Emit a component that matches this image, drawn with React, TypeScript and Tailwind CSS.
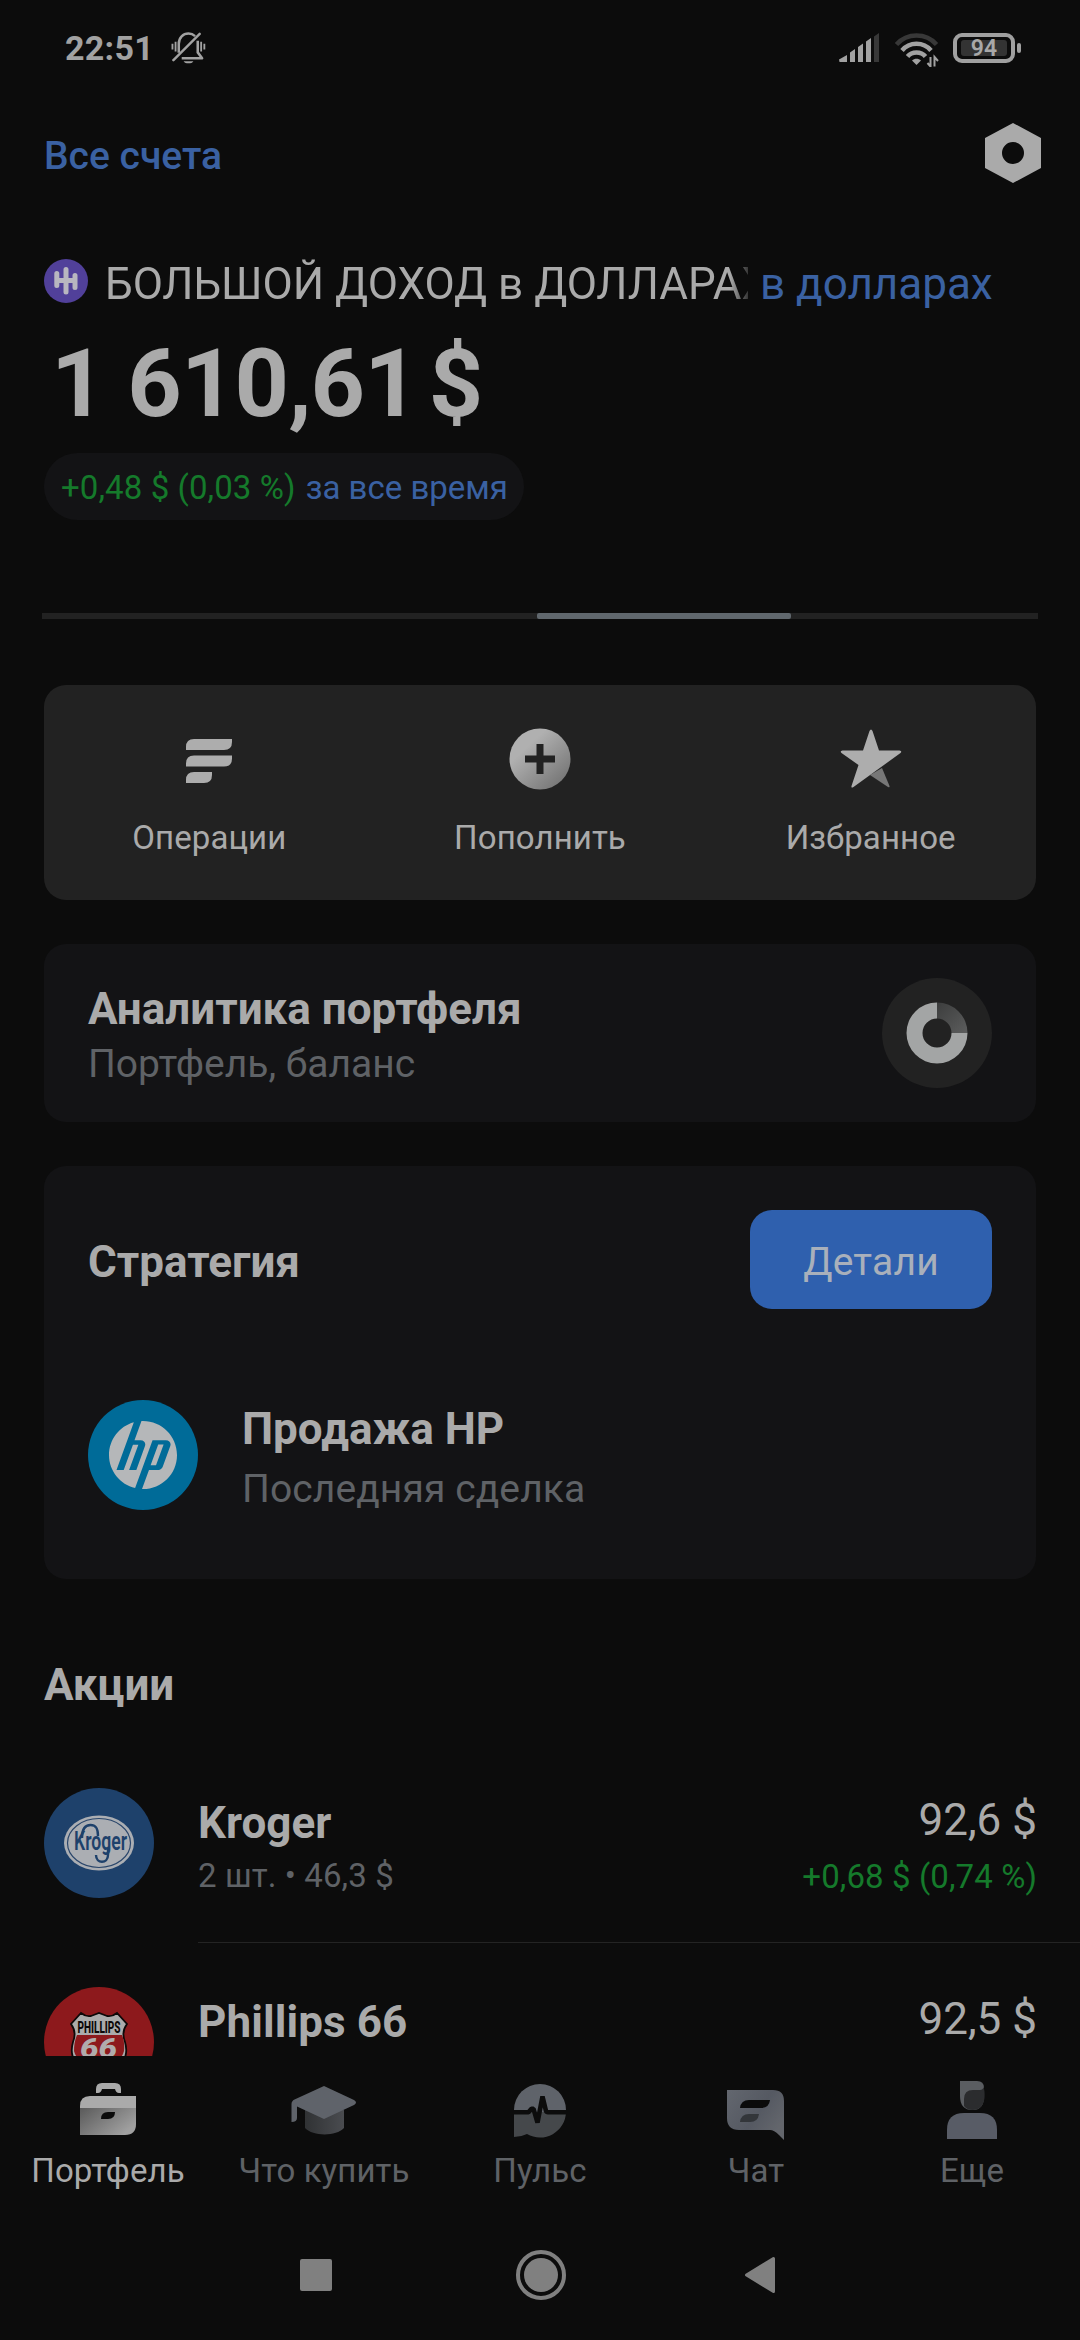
import type { ReactNode } from "react";
import { SiHp } from "react-icons/si";

function StatusBar() {
  return (
    <div className="flex h-[96px] shrink-0 items-center pl-[65px] pr-[59px] text-[#a2a2a2]">
      <span className="text-[34px] font-bold leading-10 tracking-[0.3px]">22:51</span>
      <svg className="ml-[17px]" width="35" height="34" viewBox="0 0 36 34" fill="none" stroke="currentColor" strokeWidth="2.6">
        <path d="M8 22V13C8 6 12.5 2.2 18 2.2c3 0 5 1 6.800 2.600M27.500 9.500V21.500l4.500 6H11" strokeLinejoin="round" />
        <path d="M2.500 29.500 29.500 2.500" strokeLinecap="round" />
        <path d="M1.500 12.500v6M4.700 10.500v10M31 10.500v10M34.300 12.500v6" strokeWidth="1.900" />
        <path d="M13 30.500h10c-1.500 3-8.500 3-10 0z" fill="currentColor" stroke="none" />
      </svg>
      <div className="grow" />
      <svg width="40" height="30" viewBox="0 0 40 30" fill="currentColor">
        <path d="M0 26.500 8 22v7H.5zM11 19.500l5-3.500V29h-5zM19 14l5-3.500V29h-5zM27 8.500l5-3.500V29h-5z" />
        <path d="M35 3.500 40 0v29h-5z" fill="#383838" />
      </svg>
      <svg className="ml-[16px] mt-[3px]" width="44" height="34" viewBox="0 0 44 34" fill="none" stroke="currentColor" strokeWidth="4.500">
        <path d="M1.500 11.500C12 -.5 31 -.5 41.500 11.500" stroke="#383838" />
        <path d="M7 17.500C14.500 8.500 28.500 8.500 36 17.500" />
        <path d="M12.500 23.500c4.500-5.500 13.500-5.500 18 0" />
        <path d="M17 27.500c2.500-2.200 6.500-2.200 9 0L21.500 32z" fill="currentColor" stroke="none" />
        <path d="M35.500 24v9.500l-3-3.500M39.500 33.500V24l3.500 4" strokeWidth="2" />
      </svg>
      <div className="ml-[14px] flex h-[30px] w-[62px] items-center justify-center rounded-[9px] border-4 border-[#a0a0a0]">
        <div className="flex h-[16px] w-[46px] items-center justify-center rounded-[3px] bg-[#333333] pt-[2px] text-[23px] font-semibold leading-4 text-[#a8a8a8]">94</div>
      </div>
      <div className="ml-[2px] h-[10px] w-[4px] rounded-full bg-[#a0a0a0]" />
    </div>
  );
}

function Header() {
  return (
    <div className="flex h-[114px] shrink-0 items-center justify-between pl-[44px] pr-[38px]">
      <span className="pt-[5px] text-[39px] font-medium leading-[50px] text-[#3a61a2]">Все счета</span>
      <svg width="58" height="60" viewBox="0 0 58 60">
        <path fillRule="evenodd" fill="#aaaaaa" d="M29 0 57 15V45L29 60 1 45V15zM29 19a11 11 0 1 0 0 22 11 11 0 0 0 0-22z" />
      </svg>
    </div>
  );
}

function Balance() {
  return (
    <div className="mt-[44px] shrink-0 px-[44px]">
      <div className="flex h-[60px] items-center">
        <svg className="-mt-[6px]" width="44" height="44" viewBox="0 0 44 44">
          <circle cx="22" cy="22" r="22" fill="#51409a" />
          <path d="M12.800 14.500v12M22 10.500v22.500M31 16.500v12M12.800 21.500H31" stroke="#b8b6c0" strokeWidth="5" strokeLinecap="round" fill="none" />
        </svg>
        <div className="ml-[17px] w-[643px] overflow-hidden whitespace-nowrap text-[44px] leading-[60px] text-[#aaaaaa] [mask-image:linear-gradient(to_right,black_625px,transparent_650px)]">
          БОЛЬШОЙ ДОХОД в ДОЛЛАРАХ
        </div>
        <span className="ml-[12px] whitespace-nowrap text-[44px] leading-[60px] text-[#3a61a2]">в долларах</span>
      </div>
      <div className="mt-[20px] flex h-[100px] pl-[7px] text-[95px] font-bold leading-[100px] tracking-[-0.9px] text-[#aaaaaa]">
        <span>1 610,61</span>
        <span className="ml-[11px]">$</span>
      </div>
      <div className="mt-[19px] flex h-[67px] w-[480px] items-center whitespace-nowrap rounded-full bg-[#131315] pl-[17px] pt-[2px] text-[33px]">
        <span className="tracking-[0.1px] text-[#157a2b]">+0,48 $ (0,03 %)</span>
        <span className="ml-[10px] text-[#3a61a2]">за все время</span>
      </div>
    </div>
  );
}

const actions: { label: string; icon: ReactNode }[] = [
  {
    label: "Операции",
    icon: (
      <svg width="62" height="62" viewBox="0 0 62 62" fill="#adadad">
        <path d="M8 22v-3q0-8 8-8h38v3q0 8-8 8zM8 38.500v-3q0-8 8-8h38v3q0 8-8 8zM8 55v-3q0-8 8-8h18v3q0 8-8 8z" />
      </svg>
    ),
  },
  {
    label: "Пополнить",
    icon: (
      <svg width="62" height="62" viewBox="0 0 62 62">
        <defs>
          <linearGradient id="plus" x1="0.15" y1="0.15" x2="0.85" y2="0.9">
            <stop offset="0.2" stopColor="#b0b0b0" />
            <stop offset="1" stopColor="#777777" />
          </linearGradient>
        </defs>
        <circle cx="31" cy="31" r="30.500" fill="url(#plus)" />
        <path d="M31 16v30M16 31h30" stroke="#222222" strokeWidth="7" />
      </svg>
    ),
  },
  {
    label: "Избранное",
    icon: (
      <svg width="62" height="62" viewBox="0 0 62 62">
        <path d="M42 40 49.500 58q.5 2-1.500 1L30 47z" fill="#777777" />
        <path d="M29.500 3q1.500-3 3 0l6.500 19.500h20.500q3 .5 1 2.500L13.500 59q-2.500 1.500-2-1L18.500 37 1.500 25q-2-2 1-2.500h20.500z" fill="#adadad" />
      </svg>
    ),
  },
];

function Actions() {
  return (
    <div className="mx-[44px] mt-[66px] grid h-[215px] shrink-0 grid-cols-3 rounded-[22px] bg-[#222222]">
      {actions.map((a) => (
        <div key={a.label} className="flex flex-col items-center pt-[43px]">
          {a.icon}
          <span className="mt-[28px] text-[33px] leading-10 tracking-[0.1px] text-[#aaaaaa]">{a.label}</span>
        </div>
      ))}
    </div>
  );
}

function Analytics() {
  return (
    <div className="mx-[44px] mt-[44px] flex h-[178px] shrink-0 items-center justify-between rounded-[22px] bg-[#131315] px-[44px]">
      <div className="flex flex-col pt-[6px]">
        <span className="text-[44px] font-bold leading-[56px] text-[#aaaaaa]">Аналитика портфеля</span>
        <span className="text-[39px] leading-[55px] text-[#5f6266]">Портфель, баланс</span>
      </div>
      <svg width="110" height="110" viewBox="0 0 110 110">
        <defs>
          <linearGradient id="slice" x1="0" y1="0" x2="1" y2="1">
            <stop offset="0" stopColor="#3c3d3d" />
            <stop offset="1" stopColor="#5c5d5d" />
          </linearGradient>
        </defs>
        <circle cx="55" cy="55" r="55" fill="#222222" />
        <path d="M55 24.500A30.500 30.500 0 1 0 85.500 55H69.500A14.500 14.500 0 1 1 55 40.500z" fill="#a3a5a5" />
        <path d="M55 24.500A30.500 30.500 0 0 1 85.500 55H69.500A14.500 14.500 0 0 0 55 40.500z" fill="url(#slice)" />
      </svg>
    </div>
  );
}

function Strategy() {
  return (
    <div className="mx-[44px] mt-[44px] h-[413px] shrink-0 rounded-[22px] bg-[#131315] px-[44px] pt-[44px]">
      <div className="flex items-center justify-between">
        <span className="pt-[4px] text-[44px] font-bold leading-[56px] text-[#aaaaaa]">Стратегия</span>
        <button className="h-[99px] w-[242px] rounded-[22px] bg-[#2f60ae] pt-[5px] text-[39px] tracking-[0.2px] text-[#a9b0bb]">Детали</button>
      </div>
      <div className="mt-[91px] flex h-[110px] items-center">
        <div className="flex size-[110px] items-center justify-center rounded-full bg-[#006b98]">
          <SiHp size={68} color="#b5b7b9" />
        </div>
        <div className="ml-[44px] flex flex-col pt-[8px]">
          <span className="text-[44px] font-bold leading-[60px] text-[#aaaaaa]">Продажа HP</span>
          <span className="text-[39px] leading-[60px] tracking-[0.1px] text-[#5f6266]">Последняя сделка</span>
        </div>
      </div>
    </div>
  );
}

function KrogerLogo() {
  return (
    <svg width="110" height="110" viewBox="0 0 110 110">
      <circle cx="55" cy="55" r="55" fill="#1e416b" />
      <ellipse cx="55" cy="55" rx="35" ry="27.500" fill="#abaeb3" />
      <ellipse cx="55" cy="55" rx="31.500" ry="24.500" fill="none" stroke="#2a466b" strokeWidth="1.200" />
      <text x="30" y="62" textLength="53" lengthAdjust="spacingAndGlyphs" fontFamily="Roboto" fontSize="25" fontWeight="600" fill="#1e416b">Kroger</text>
      <path d="M38 50C38 40 42 37 46.500 37c6 0 7.500 4 7.500 11M52 67c0 9 12 9 12 0V60" fill="none" stroke="#1e416b" strokeWidth="2.400" />
    </svg>
  );
}

function PhillipsLogo() {
  return (
    <svg width="110" height="110" viewBox="0 0 110 110">
      <circle cx="55" cy="55" r="55" fill="#8d191c" />
      <path d="M37 26q5 4 10 3l8-3 8 3q5 1 10-3L83 37q-6 8-2 18c4 14 0 24-26 35C29 79 25 69 29 55q4-10-2-18z" fill="#ababab" stroke="#0d0808" strokeWidth="1.800" />
      <path d="M33 48h45q3 6 2 16-3 12-25 22-22-10-25-22 0-9 3-16z" fill="#8d191c" />
      <text x="33.500" y="45.500" textLength="43" lengthAdjust="spacingAndGlyphs" fontFamily="Roboto" fontSize="16" fontWeight="800" fill="#0d0808">PHILLIPS</text>
      <text x="36" y="71" textLength="37" lengthAdjust="spacingAndGlyphs" fontFamily="Roboto" fontSize="27" fontWeight="900" fontStyle="italic" fill="#b0acac">66</text>
    </svg>
  );
}

function StockRow({ logo, name, price, detail, change }: { logo: ReactNode; name: string; price: string; detail: string; change: string }) {
  return (
    <div className="flex h-[200px] shrink-0 pl-[44px]">
      <div className="pt-[45px]">{logo}</div>
      <div className="ml-[44px] flex grow justify-between border-b border-[#242424] pr-[43px] pt-[52px]">
        <div className="flex flex-col">
          <span className="text-[44px] font-bold leading-[56px] text-[#aaaaaa]">{name}</span>
          <span className="text-[33px] leading-[50px] tracking-[0.1px] text-[#5f6266]">{detail}</span>
        </div>
        <div className="-mt-[3px] flex flex-col items-end">
          <span className="text-[44px] leading-[56px] text-[#aaaaaa]">{price}</span>
          <span className="mt-[4px] text-[33px] leading-[50px] tracking-[0.1px] text-[#157a2b]">{change}</span>
        </div>
      </div>
    </div>
  );
}

const tabs: { label: string; icon: ReactNode }[] = [
  {
    label: "Портфель",
    icon: (
      <svg width="66" height="66" viewBox="0 0 66 66">
        <defs>
          <linearGradient id="case" x1="0" y1="0" x2="1" y2="0.6">
            <stop offset="0" stopColor="#5a5a5a" />
            <stop offset="1" stopColor="#a0a0a0" />
          </linearGradient>
        </defs>
        <path d="M21 17V13q0-6 6-6h13q6 0 6 6v4h-2q-3 0-4-4H27q-1 4-4 4z" fill="#aaaaaa" />
        <path d="M5 32V30Q5 20 15 20H61V32z" fill="#aaaaaa" />
        <path d="M5 32H61V48Q61 59 50 59H5z" fill="url(#case)" />
        <path d="M26 43q0-7 7-7h7q0 7-7 7z" fill="#0b0b0b" />
      </svg>
    ),
  },
  {
    label: "Что купить",
    icon: (
      <svg width="66" height="66" viewBox="0 0 66 66">
        <defs>
          <linearGradient id="hat" x1="0" y1="0" x2="1" y2="0">
            <stop offset="0" stopColor="#303234" />
            <stop offset="1" stopColor="#4a4c50" />
          </linearGradient>
        </defs>
        <path d="M14 34H53V52C45 60.500 22 60.500 14 52z" fill="url(#hat)" />
        <path d="M33 10 63 24q4 2.500 0 5L33 43 6 30.500V42q0 4-5.500 4V28q0-3 3-4.500z" fill="#5f636a" />
      </svg>
    ),
  },
  {
    label: "Пульс",
    icon: (
      <svg width="66" height="66" viewBox="0 0 66 66">
        <path d="M7 34A26 26 0 0 1 59 34V36H7z" fill="#5f636a" />
        <path d="M7 36H59A26 26 0 0 1 20 58Q14 61 7 61z" fill="#45484b" />
        <path d="M5 36.300H21.500l3-3.500h2L30.500 46.500 35.500 20.500 39 35q.5 1.300 2 1.300H61" fill="none" stroke="#0c0c0c" strokeWidth="4.600" strokeLinejoin="bevel" />
      </svg>
    ),
  },
  {
    label: "Чат",
    icon: (
      <svg width="66" height="66" viewBox="0 0 66 66">
        <defs>
          <linearGradient id="chat" x1="0" y1="0" x2="1" y2="0.6">
            <stop offset="0" stopColor="#63676f" />
            <stop offset="0.6" stopColor="#555962" />
            <stop offset="1" stopColor="#63666c" />
          </linearGradient>
        </defs>
        <path d="M4 14H50Q61 14 61 25V64L56 59Q51 54 47 54H16Q4 54 4 42z" fill="url(#chat)" />
        <path d="M17 32q1-8 9-8H47q-1 8-9 8z" fill="#0b0b0b" />
        <path d="M17 46q1-8 9-8H36q-1 8-9 8z" fill="#33363a" />
      </svg>
    ),
  },
  {
    label: "Еще",
    icon: (
      <svg width="66" height="66" viewBox="0 0 66 66">
        <path d="M21 5H38Q45 5 45 12V20Q45 34 33.500 34 21 34 21 20z" fill="#5a5d61" />
        <path d="M25 31V23q0-9 9-9h7q3 0 3.500-3Q46 15 45.500 22 44 34 33.500 34 28 34 25 30z" fill="#2b2c2e" />
        <path d="M8 63V54Q8 37 25 37H41Q58 37 58 54V63z" fill="#585c66" />
      </svg>
    ),
  },
];

function BottomTabs() {
  return (
    <div className="grid h-[144px] shrink-0 grid-cols-5 bg-[#0c0c0c]">
      {tabs.map((t, i) => (
        <div key={t.label} className="flex flex-col items-center pt-[20px]">
          {t.icon}
          <span className={i === 0 ? "mt-[9px] whitespace-nowrap text-[33px] leading-10 tracking-[0.1px] text-[#aaaaaa]" : "mt-[9px] whitespace-nowrap text-[33px] leading-10 tracking-[0.1px] text-[#5f6266]"}>
            {t.label}
          </span>
        </div>
      ))}
    </div>
  );
}

function SystemNav() {
  return (
    <div className="flex h-[140px] shrink-0 items-center pl-[300px] pt-[10px]">
      <div className="size-[32px] rounded-[2px] bg-[#808080]" />
      <div className="ml-[184px] flex size-[50px] items-center justify-center rounded-full border-4 border-[#808080]">
        <div className="size-[34px] rounded-full bg-[#808080]" />
      </div>
      <svg className="ml-[178px]" width="32" height="38" viewBox="0 0 32 38">
        <path d="M2.500 19 29.500 2.500V35.500z" fill="#808080" stroke="#808080" strokeWidth="3" strokeLinejoin="round" />
      </svg>
    </div>
  );
}

export default function App() {
  return (
    <div className="flex h-[2340px] w-[1080px] flex-col overflow-hidden bg-[#0c0c0c] font-['Roboto',sans-serif]">
      <StatusBar />
      <Header />
      <Balance />
      <div className="mx-[42px] mt-[93px] h-[6px] shrink-0 bg-[#222222]">
        <div className="ml-[495px] h-full w-[254px] rounded-[2px] bg-[#60676d]" />
      </div>
      <Actions />
      <Analytics />
      <Strategy />
      <h2 className="mt-[76px] shrink-0 pl-[44px] text-[44px] font-bold leading-[60px] text-[#aaaaaa]">Акции</h2>
      <div className="mt-[28px] flex h-[313px] shrink-0 flex-col overflow-hidden">
        <StockRow logo={<KrogerLogo />} name="Kroger" detail="2 шт. • 46,3 $" price="92,6 $" change="+0,68 $ (0,74 %)" />
        <div className="flex h-[199px] shrink-0 pl-[44px]">
          <div className="pt-[44px]">
            <PhillipsLogo />
          </div>
          <div className="ml-[44px] flex grow justify-between pr-[43px] pt-[51px]">
            <span className="text-[44px] font-bold leading-[56px] tracking-[0.1px] text-[#aaaaaa]">Phillips 66</span>
            <span className="-mt-[3px] text-[44px] leading-[56px] text-[#aaaaaa]">92,5 $</span>
          </div>
        </div>
      </div>
      <BottomTabs />
      <SystemNav />
    </div>
  );
}
